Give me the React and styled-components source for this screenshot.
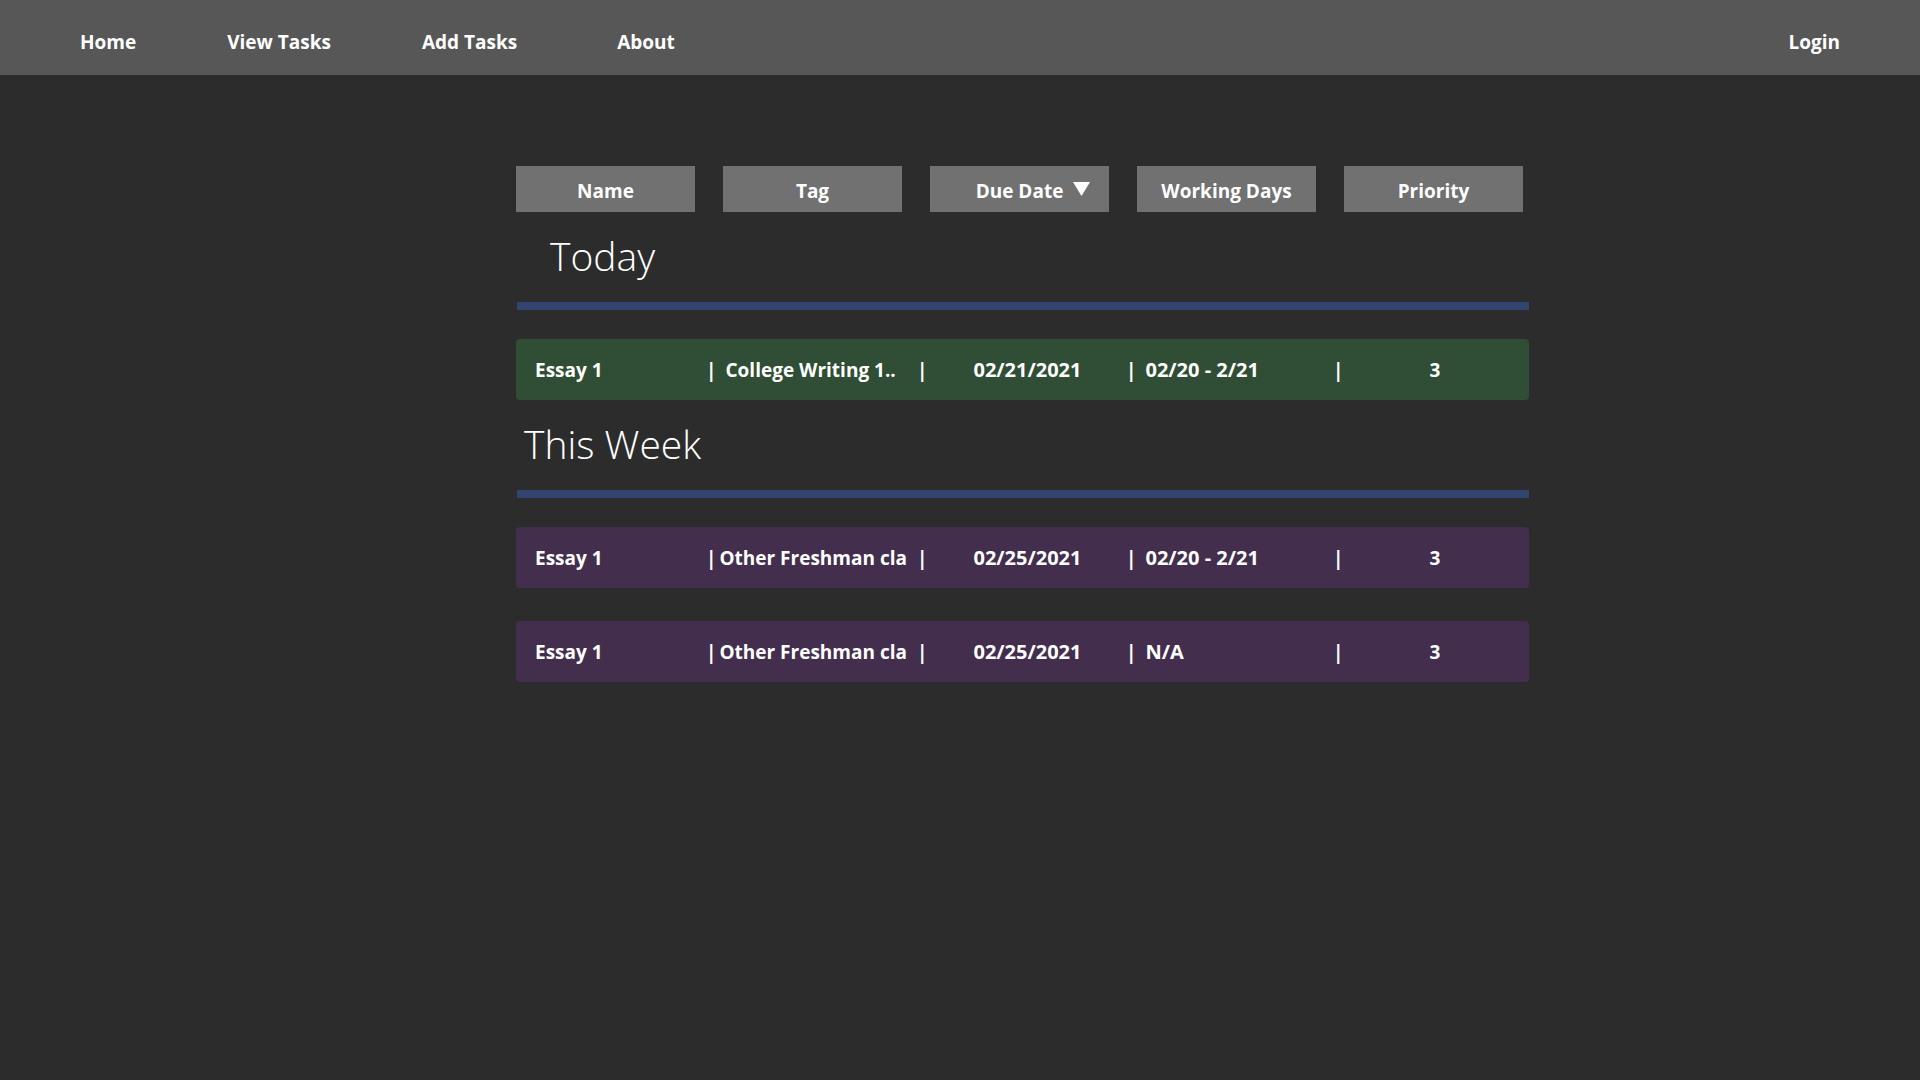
import React from 'react';
import styled, { createGlobalStyle } from 'styled-components';

const GlobalStyle = createGlobalStyle`
  body {
    margin: 0;
    background: #2c2c2c;
    color: #fff;
    font-family: "Open Sans", "Noto Sans", sans-serif;
  }
`;

const NAV_LINKS = ['Home', 'View Tasks', 'Add Tasks', 'About'];
const HEADERS = ['Name', 'Tag', 'Due Date', 'Working Days', 'Priority'];

const SECTIONS = [
  {
    title: 'Today',
    indent: 34,
    tasks: [
      { name: 'Essay 1', tag: 'College Writing 1..', tagGap: 9, due: '02/21/2021', work: '02/20 - 2/21', priority: 3, color: '#2f4e35' },
    ],
  },
  {
    title: 'This Week',
    indent: 8,
    tasks: [
      { name: 'Essay 1', tag: 'Other Freshman cla', tagGap: 3, due: '02/25/2021', work: '02/20 - 2/21', priority: 3, color: '#432e4e' },
      { name: 'Essay 1', tag: 'Other Freshman cla', tagGap: 3, due: '02/25/2021', work: 'N/A', priority: 3, color: '#432e4e' },
    ],
  },
];

const Navbar = styled.nav`
  box-sizing: border-box;
  height: 75px;
  padding: 8px 80px 0 80px;
  background: #575757;
  display: flex;
  align-items: center;
  justify-content: space-between;
`;

const NavGroup = styled.div`
  display: flex;
  align-items: center;
  gap: 91px;
`;

const NavLink = styled.a`
  color: #fff;
  font-size: 19px;
  font-weight: 700;
  text-decoration: none;
  cursor: pointer;
  margin-left: ${(p) => p.$shift || 0}px;
`;

const Main = styled.main`
  width: 1013px;
  margin-left: 516px;
  padding-top: 91px;
`;

const HeaderRow = styled.div`
  display: flex;
  gap: 28px;
`;

const HeaderButton = styled.button`
  box-sizing: border-box;
  width: 179px;
  height: 46px;
  border: 0;
  padding: 3px 0 0 0;
  background: #717171;
  color: #fff;
  font-family: inherit;
  font-size: 19px;
  font-weight: 700;
  display: flex;
  align-items: center;
  justify-content: center;
  cursor: pointer;
`;

const SortIcon = styled.svg`
  width: 17px;
  height: 14px;
  margin: -3px -27px 0 10px;
  fill: #fff;
`;

const SectionTitle = styled.h2`
  margin: 20px 0 0 ${(p) => p.$indent}px;
  font-size: 39px;
  line-height: 48px;
  font-weight: 300;
`;

const Divider = styled.div`
  height: 8px;
  margin: 22px 0 29px 1px;
  background: #324570;
`;

const TaskList = styled.div`
  display: flex;
  flex-direction: column;
  gap: 33px;
`;

const TaskRow = styled.div`
  height: 61px;
  border-radius: 4px;
  background: ${(p) => p.$color};
  padding-left: 19px;
  display: grid;
  grid-template-columns: 171px 211px 209px 207px 1fr;
  align-items: center;
  font-size: 19px;
  font-weight: 700;
`;

const Cell = styled.div`
  display: flex;
  align-items: center;
  white-space: nowrap;
`;

const CellText = styled.span`
  margin-left: ${(p) => p.$offset}px;
  font-size: ${(p) => (p.$wide ? '20px' : 'inherit')};
`;

const Column = ({ offset, wide, children }) => (
  <Cell>
    <span>|</span>
    <CellText $offset={offset} $wide={wide}>{children}</CellText>
  </Cell>
);

export default function App() {
  return (
    <>
      <GlobalStyle />
      <Navbar>
        <NavGroup>
          {NAV_LINKS.map((l) => (
            <NavLink key={l} $shift={l === 'About' ? 9 : 0}>{l}</NavLink>
          ))}
        </NavGroup>
        <NavLink>Login</NavLink>
      </Navbar>
      <Main>
        <HeaderRow>
          {HEADERS.map((h) => (
            <HeaderButton key={h}>
              {h}
              {h === 'Due Date' && (
                <SortIcon viewBox="0 0 17 14">
                  <polygon points="0,0 17,0 8.5,14" />
                </SortIcon>
              )}
            </HeaderButton>
          ))}
        </HeaderRow>
        {SECTIONS.map((s) => (
          <section key={s.title}>
            <SectionTitle $indent={s.indent}>{s.title}</SectionTitle>
            <Divider />
            <TaskList>
              {s.tasks.map((t, i) => (
                <TaskRow key={i} $color={t.color}>
                  <Cell>{t.name}</Cell>
                  <Column offset={t.tagGap}>{t.tag}</Column>
                  <Column offset={46} wide>{t.due}</Column>
                  <Column offset={9} wide>{t.work}</Column>
                  <Column offset={86}>{t.priority}</Column>
                </TaskRow>
              ))}
            </TaskList>
          </section>
        ))}
      </Main>
    </>
  );
}
